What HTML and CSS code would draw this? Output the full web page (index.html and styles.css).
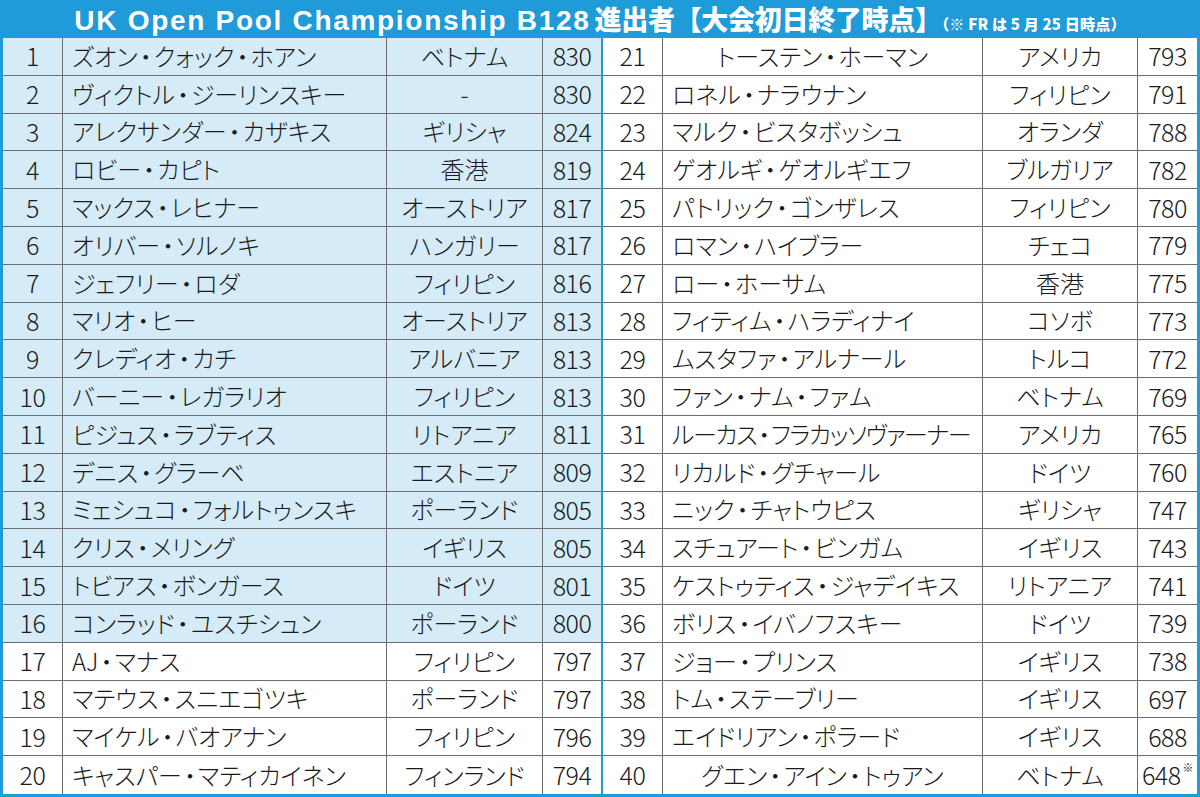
FILE: index.html
```html
<!DOCTYPE html>
<html lang="ja">
<head>
<meta charset="utf-8">
<link rel="stylesheet" href="styles.css">
</head>
<body>
<div class="sheet">
  <div class="title"><span class="en">UK Open Pool Championship B128</span> <span class="ja">進出者【大会初日終了時点】</span><span class="note">（※ FR は 5 月 25 日時点）</span></div>
  <div class="board">
    <div class="half left">
      <div class="row hl"><div class="c num">1</div><div class="c name">ズオン<span class="dot">・</span>クォック<span class="dot">・</span>ホアン</div><div class="c ctry">ベトナム</div><div class="c pt">830</div></div>
      <div class="row hl"><div class="c num">2</div><div class="c name">ヴィクトル<span class="dot">・</span>ジーリンスキー</div><div class="c ctry">-</div><div class="c pt">830</div></div>
      <div class="row hl"><div class="c num">3</div><div class="c name">アレクサンダー<span class="dot">・</span>カザキス</div><div class="c ctry">ギリシャ</div><div class="c pt">824</div></div>
      <div class="row hl"><div class="c num">4</div><div class="c name">ロビー<span class="dot">・</span>カピト</div><div class="c ctry">香港</div><div class="c pt">819</div></div>
      <div class="row hl"><div class="c num">5</div><div class="c name">マックス<span class="dot">・</span>レヒナー</div><div class="c ctry">オーストリア</div><div class="c pt">817</div></div>
      <div class="row hl"><div class="c num">6</div><div class="c name">オリバー<span class="dot">・</span>ソルノキ</div><div class="c ctry">ハンガリー</div><div class="c pt">817</div></div>
      <div class="row hl"><div class="c num">7</div><div class="c name">ジェフリー<span class="dot">・</span>ロダ</div><div class="c ctry">フィリピン</div><div class="c pt">816</div></div>
      <div class="row hl"><div class="c num">8</div><div class="c name">マリオ<span class="dot">・</span>ヒー</div><div class="c ctry">オーストリア</div><div class="c pt">813</div></div>
      <div class="row hl"><div class="c num">9</div><div class="c name">クレディオ<span class="dot">・</span>カチ</div><div class="c ctry">アルバニア</div><div class="c pt">813</div></div>
      <div class="row hl"><div class="c num">10</div><div class="c name">バーニー<span class="dot">・</span>レガラリオ</div><div class="c ctry">フィリピン</div><div class="c pt">813</div></div>
      <div class="row hl"><div class="c num">11</div><div class="c name">ピジュス<span class="dot">・</span>ラブティス</div><div class="c ctry">リトアニア</div><div class="c pt">811</div></div>
      <div class="row hl"><div class="c num">12</div><div class="c name">デニス<span class="dot">・</span>グラーベ</div><div class="c ctry">エストニア</div><div class="c pt">809</div></div>
      <div class="row hl"><div class="c num">13</div><div class="c name">ミェシュコ<span class="dot">・</span>フォルトゥンスキ</div><div class="c ctry">ポーランド</div><div class="c pt">805</div></div>
      <div class="row hl"><div class="c num">14</div><div class="c name">クリス<span class="dot">・</span>メリング</div><div class="c ctry">イギリス</div><div class="c pt">805</div></div>
      <div class="row hl"><div class="c num">15</div><div class="c name">トビアス<span class="dot">・</span>ボンガース</div><div class="c ctry">ドイツ</div><div class="c pt">801</div></div>
      <div class="row hl"><div class="c num">16</div><div class="c name">コンラッド<span class="dot">・</span>ユスチシュン</div><div class="c ctry">ポーランド</div><div class="c pt">800</div></div>
      <div class="row"><div class="c num">17</div><div class="c name">AJ<span class="dot">・</span>マナス</div><div class="c ctry">フィリピン</div><div class="c pt">797</div></div>
      <div class="row"><div class="c num">18</div><div class="c name">マテウス<span class="dot">・</span>スニエゴツキ</div><div class="c ctry">ポーランド</div><div class="c pt">797</div></div>
      <div class="row"><div class="c num">19</div><div class="c name">マイケル<span class="dot">・</span>バオアナン</div><div class="c ctry">フィリピン</div><div class="c pt">796</div></div>
      <div class="row"><div class="c num">20</div><div class="c name">キャスパー<span class="dot">・</span>マティカイネン</div><div class="c ctry">フィンランド</div><div class="c pt">794</div></div>
    </div>
    <div class="half right">
      <div class="row"><div class="c num">21</div><div class="c name center">トーステン<span class="dot">・</span>ホーマン</div><div class="c ctry">アメリカ</div><div class="c pt">793</div></div>
      <div class="row"><div class="c num">22</div><div class="c name">ロネル<span class="dot">・</span>ナラウナン</div><div class="c ctry">フィリピン</div><div class="c pt">791</div></div>
      <div class="row"><div class="c num">23</div><div class="c name">マルク<span class="dot">・</span>ビスタボッシュ</div><div class="c ctry">オランダ</div><div class="c pt">788</div></div>
      <div class="row"><div class="c num">24</div><div class="c name">ゲオルギ<span class="dot">・</span>ゲオルギエフ</div><div class="c ctry">ブルガリア</div><div class="c pt">782</div></div>
      <div class="row"><div class="c num">25</div><div class="c name">パトリック<span class="dot">・</span>ゴンザレス</div><div class="c ctry">フィリピン</div><div class="c pt">780</div></div>
      <div class="row"><div class="c num">26</div><div class="c name">ロマン<span class="dot">・</span>ハイブラー</div><div class="c ctry">チェコ</div><div class="c pt">779</div></div>
      <div class="row"><div class="c num">27</div><div class="c name">ロー<span class="dot">・</span>ホーサム</div><div class="c ctry">香港</div><div class="c pt">775</div></div>
      <div class="row"><div class="c num">28</div><div class="c name">フィティム<span class="dot">・</span>ハラディナイ</div><div class="c ctry">コソボ</div><div class="c pt">773</div></div>
      <div class="row"><div class="c num">29</div><div class="c name">ムスタファ<span class="dot">・</span>アルナール</div><div class="c ctry">トルコ</div><div class="c pt">772</div></div>
      <div class="row"><div class="c num">30</div><div class="c name">ファン<span class="dot">・</span>ナム<span class="dot">・</span>ファム</div><div class="c ctry">ベトナム</div><div class="c pt">769</div></div>
      <div class="row"><div class="c num">31</div><div class="c name tight">ルーカス<span class="dot">・</span>フラカッソヴァーナー</div><div class="c ctry">アメリカ</div><div class="c pt">765</div></div>
      <div class="row"><div class="c num">32</div><div class="c name">リカルド<span class="dot">・</span>グチャール</div><div class="c ctry">ドイツ</div><div class="c pt">760</div></div>
      <div class="row"><div class="c num">33</div><div class="c name">ニック<span class="dot">・</span>チャトウピス</div><div class="c ctry">ギリシャ</div><div class="c pt">747</div></div>
      <div class="row"><div class="c num">34</div><div class="c name">スチュアート<span class="dot">・</span>ビンガム</div><div class="c ctry">イギリス</div><div class="c pt">743</div></div>
      <div class="row"><div class="c num">35</div><div class="c name">ケストゥティス<span class="dot">・</span>ジャデイキス</div><div class="c ctry">リトアニア</div><div class="c pt">741</div></div>
      <div class="row"><div class="c num">36</div><div class="c name">ボリス<span class="dot">・</span>イバノフスキー</div><div class="c ctry">ドイツ</div><div class="c pt">739</div></div>
      <div class="row"><div class="c num">37</div><div class="c name">ジョー<span class="dot">・</span>プリンス</div><div class="c ctry">イギリス</div><div class="c pt">738</div></div>
      <div class="row"><div class="c num">38</div><div class="c name">トム<span class="dot">・</span>ステーブリー</div><div class="c ctry">イギリス</div><div class="c pt">697</div></div>
      <div class="row"><div class="c num">39</div><div class="c name">エイドリアン<span class="dot">・</span>ポラード</div><div class="c ctry">イギリス</div><div class="c pt">688</div></div>
      <div class="row"><div class="c num">40</div><div class="c name center">グエン<span class="dot">・</span>アイン<span class="dot">・</span>トゥアン</div><div class="c ctry">ベトナム</div><div class="c pt">648<span class="mark">※</span></div></div>
    </div>
  </div>
</div>
</body>
</html>
```
FILE: styles.css
```css
html, body {
  margin: 0;
  padding: 0;
  background: #ffffff;
}
.sheet {
  width: 1200px;
  height: 797px;
  display: flex;
  flex-direction: column;
  background: #1e9bd8;
  overflow: hidden;
}
.title {
  height: 38px;
  line-height: 38px;
  text-align: center;
  color: #ffffff;
  white-space: nowrap;
  font-weight: 700;
}
.en {
  font-family: "Liberation Sans", "Noto Sans", sans-serif;
  font-size: 28px;
  letter-spacing: 1.7px;
}
.ja {
  font-family: "Noto Sans CJK JP", sans-serif;
  font-size: 27px;
  font-weight: 900;
  letter-spacing: -0.3px;
}
.note {
  font-family: "Noto Sans CJK JP", sans-serif;
  font-size: 15px;
  font-weight: 900;
  letter-spacing: 0.2px;
}
.board {
  display: flex;
  gap: 2px;
  padding: 0 3px 3px 3px;
  height: 759px;
  box-sizing: border-box;
}
.half {
  display: flex;
  flex-direction: column;
  background: #ffffff;
}
.left { width: 598px; }
.right { width: 594px; }
.row {
  display: grid;
  height: 37.8px;
  box-sizing: border-box;
  border-bottom: 1px solid #6e6e6e;
  background: #ffffff;
}
.row:last-child { border-bottom: none; }
.row.hl { background: #d5ebf8; }
.left .row { grid-template-columns: 60px 324px 156px 58px; }
.right .row { grid-template-columns: 60px 320px 155px 59px; }
.c {
  display: flex;
  align-items: center;
  justify-content: center;
  border-right: 1px solid #6e6e6e;
  color: #1a1a1a;
  font-family: "Noto Sans CJK JP", sans-serif;
  font-weight: 300;
  font-size: 24px;
  font-feature-settings: "palt";
  white-space: nowrap;
  overflow: hidden;
  line-height: 1;
  padding-bottom: 1px;
}
.c:last-child { border-right: none; }
.name {
  justify-content: flex-start;
  padding-left: 9px;
}
.name.center {
  justify-content: center;
  padding-left: 0;
}
.name.tight { letter-spacing: -1.4px; }
.dot { margin: 0 2px; }
.num, .pt {
  font-size: 25px;
  letter-spacing: -0.5px;
}
.mark {
  font-size: 11px;
  align-self: flex-start;
  margin-top: 6px;
  margin-left: 2px;
}
```
